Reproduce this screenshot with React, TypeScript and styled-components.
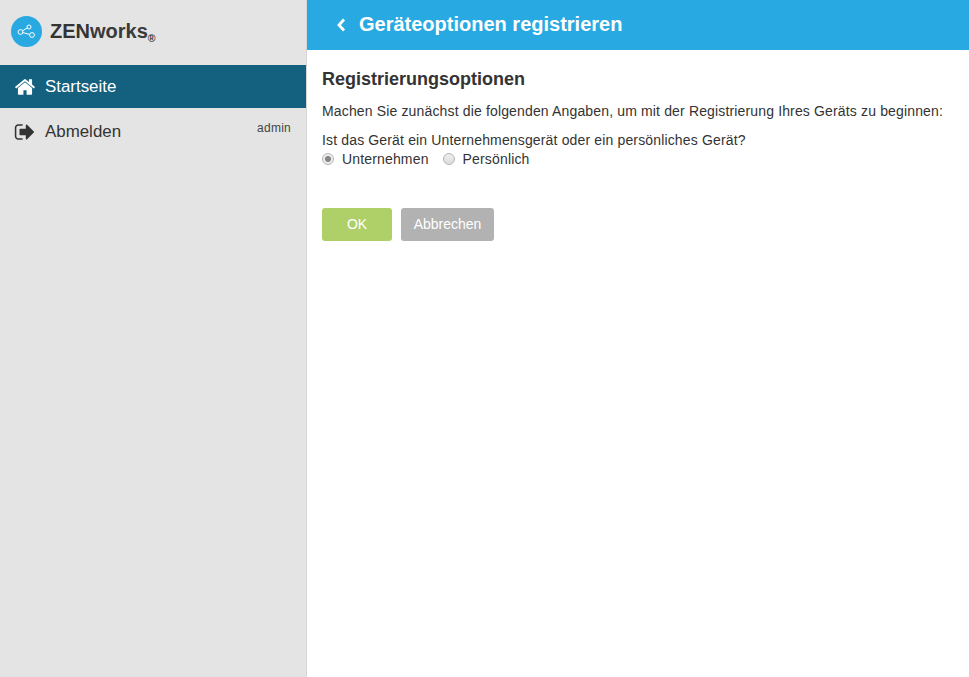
import React from "react";
import styled, { createGlobalStyle } from "styled-components";

const Global = createGlobalStyle`
  html, body { margin: 0; padding: 0; height: 100%; background: #fff; }
  #root { height: 100%; }
  * { box-sizing: border-box; }
  body { font-family: "Liberation Sans", Arial, sans-serif; color: #333; }
`;

const Page = styled.div`
  display: flex;
  height: 677px;
  overflow: hidden;
`;

const Sidebar = styled.aside`
  width: 307px;
  flex: none;
  background: #e4e4e4;
  border-right: 1px solid #d6d6d6;
`;

const Brand = styled.div`
  height: 65px;
  display: flex;
  align-items: flex-start;
  padding: 16px 0 0 11px;
`;

const LogoBadge = styled.div`
  width: 31px;
  height: 31px;
  border-radius: 50%;
  background: #29a9e1;
  display: flex;
  margin-right: 8px;
`;

const BrandName = styled.div`
  font-size: 20px;
  line-height: 30px;
  font-weight: 700;
  color: #333;
  white-space: nowrap;
`;

const BrandLight = styled.span`
  color: #3a3a3a;
`;

const Registered = styled.span`
  font-size: 10.5px;
  font-weight: 700;
  position: relative;
  top: 4px;
`;

const NavItem = styled.a<{ $active?: boolean }>`
  display: flex;
  align-items: center;
  height: ${(p) => (p.$active ? "43px" : "47px")};
  padding: 0 15px;
  font-size: 16.9px;
  color: ${(p) => (p.$active ? "#fff" : "#333")};
  background: ${(p) => (p.$active ? "#14607f" : "transparent")};
`;

const NavIcon = styled.svg`
  width: 22px;
  height: 22px;
  flex: none;
  margin: 0 9px 0 -1px;
  fill: currentColor;
`;

const NavLabel = styled.span`
  flex: 1;
`;

const NavMeta = styled.span`
  font-size: 12px;
  letter-spacing: 0.25px;
  color: #444;
  align-self: flex-start;
  margin-top: 13px;
`;

const Main = styled.main`
  flex: 1;
  min-width: 0;
`;

const Header = styled.header`
  height: 50px;
  background: #29a9e1;
  display: flex;
  align-items: center;
  padding: 0 0 1px 28px;
  color: #fff;
`;

const BackIcon = styled.svg`
  width: 12px;
  height: 14px;
  margin: 1px 12px 0 0;
  flex: none;
`;

const Title = styled.h1`
  margin: 0;
  font-size: 20px;
  font-weight: 700;
`;

const Content = styled.section`
  padding: 19px 15px 0;
`;

const Heading = styled.h2`
  margin: 0 0 14px;
  font-size: 18px;
  line-height: 20px;
  font-weight: 700;
  color: #333;
`;

const Text = styled.p`
  margin: 0;
  font-size: 14px;
  line-height: 17px;
  letter-spacing: 0.15px;
`;

const Question = styled(Text)`
  margin-top: 12px;
`;

const RadioRow = styled.div`
  display: flex;
  align-items: center;
  height: 20px;
  font-size: 14px;
  letter-spacing: 0.16px;
`;

const RadioDot = styled.span<{ $checked?: boolean }>`
  width: 12px;
  height: 12px;
  border-radius: 50%;
  border: 1px solid #b5b5b5;
  background: ${(p) =>
    p.$checked ? "radial-gradient(circle, #858585 0 2.6px, #ececec 3.4px)" : "linear-gradient(#eee, #dcdcdc)"};
  margin-right: 8px;
`;

const RadioLabel = styled.span`
  margin-right: 14px;
`;

const Actions = styled.div`
  display: flex;
  gap: 9px;
  margin-top: 39px;
`;

const Button = styled.button<{ $primary?: boolean }>`
  height: 33px;
  width: ${(p) => (p.$primary ? "70px" : "93px")};
  border: 0;
  padding: 0 0 2px;
  border-radius: 3px;
  background: ${(p) => (p.$primary ? "#afcf69" : "#b2b2b2")};
  color: #fff;
  font: 14px "Liberation Sans", Arial, sans-serif;
`;

const ShareLogo = () => (
  <svg width="31" height="31" viewBox="0 0 31 31" fill="none" stroke="#fff" strokeWidth="1">
    <circle cx="9.5" cy="16" r="2.4" />
    <circle cx="18" cy="11" r="2" />
    <circle cx="21" cy="19" r="2.4" />
    <path d="M11.6 14.8 L16.2 12 M11.8 16.6 L18.7 18.4" />
  </svg>
);

export default function App() {
  return (
    <Page>
      <Global />
      <Sidebar>
        <Brand>
          <LogoBadge><ShareLogo /></LogoBadge>
          <BrandName>
            ZEN<BrandLight>works</BrandLight>
            <Registered>®</Registered>
          </BrandName>
        </Brand>
        <NavItem $active>
          <NavIcon viewBox="0 0 1792 1792">
            <path d="M1472 992v480q0 26-19 45t-45 19h-384v-384h-256v384h-384q-26 0-45-19t-19-45v-480q0-1 .5-3t.5-3l575-474 575 474q1 2 1 6zm223-69l-62 74q-8 9-21 11h-3q-13 0-21-7l-692-577-692 577q-12 8-24 7-13-2-21-11l-62-74q-8-10-7-23.5t11-21.5l719-599q32-26 76-26t76 26l244 204v-195q0-14 9-23t23-9h192q14 0 23 9t9 23v408l219 182q10 8 11 21.5t-7 23.5z" />
          </NavIcon>
          <NavLabel>Startseite</NavLabel>
        </NavItem>
        <NavItem>
          <NavIcon viewBox="0 0 1792 1792">
            <path d="M704 1440q0 4 1 20t.5 26.5-3 23.5-10 19.5-20.5 6.5h-320q-119 0-203.5-84.5t-84.5-203.5v-704q0-119 84.5-203.5t203.5-84.5h320q13 0 22.5 9.5t9.5 22.5q0 4 1 20t.5 26.5-3 23.5-10 19.5-20.5 6.5h-320q-66 0-113 47t-47 113v704q0 66 47 113t113 47h312l11.5 1 11.5 3 8 5.5 7 9 2 13.5zm928-544q0 26-19 45l-544 544q-19 19-45 19t-45-19-19-45v-288h-448q-26 0-45-19t-19-45v-384q0-26 19-45t45-19h448v-288q0-26 19-45t45-19 45 19l544 544q19 19 19 45z" />
          </NavIcon>
          <NavLabel>Abmelden</NavLabel>
          <NavMeta>admin</NavMeta>
        </NavItem>
      </Sidebar>
      <Main>
        <Header>
          <BackIcon viewBox="0 0 12 14" fill="none" stroke="#fff" strokeWidth="2.8">
            <path d="M9 1.5 L4 7 L9 12.5" />
          </BackIcon>
          <Title>Geräteoptionen registrieren</Title>
        </Header>
        <Content>
          <Heading>Registrierungsoptionen</Heading>
          <Text>Machen Sie zunächst die folgenden Angaben, um mit der Registrierung Ihres Geräts zu beginnen:</Text>
          <Question>Ist das Gerät ein Unternehmensgerät oder ein persönliches Gerät?</Question>
          <RadioRow>
            <RadioDot $checked />
            <RadioLabel>Unternehmen</RadioLabel>
            <RadioDot />
            <RadioLabel>Persönlich</RadioLabel>
          </RadioRow>
          <Actions>
            <Button $primary>OK</Button>
            <Button>Abbrechen</Button>
          </Actions>
        </Content>
      </Main>
    </Page>
  );
}
